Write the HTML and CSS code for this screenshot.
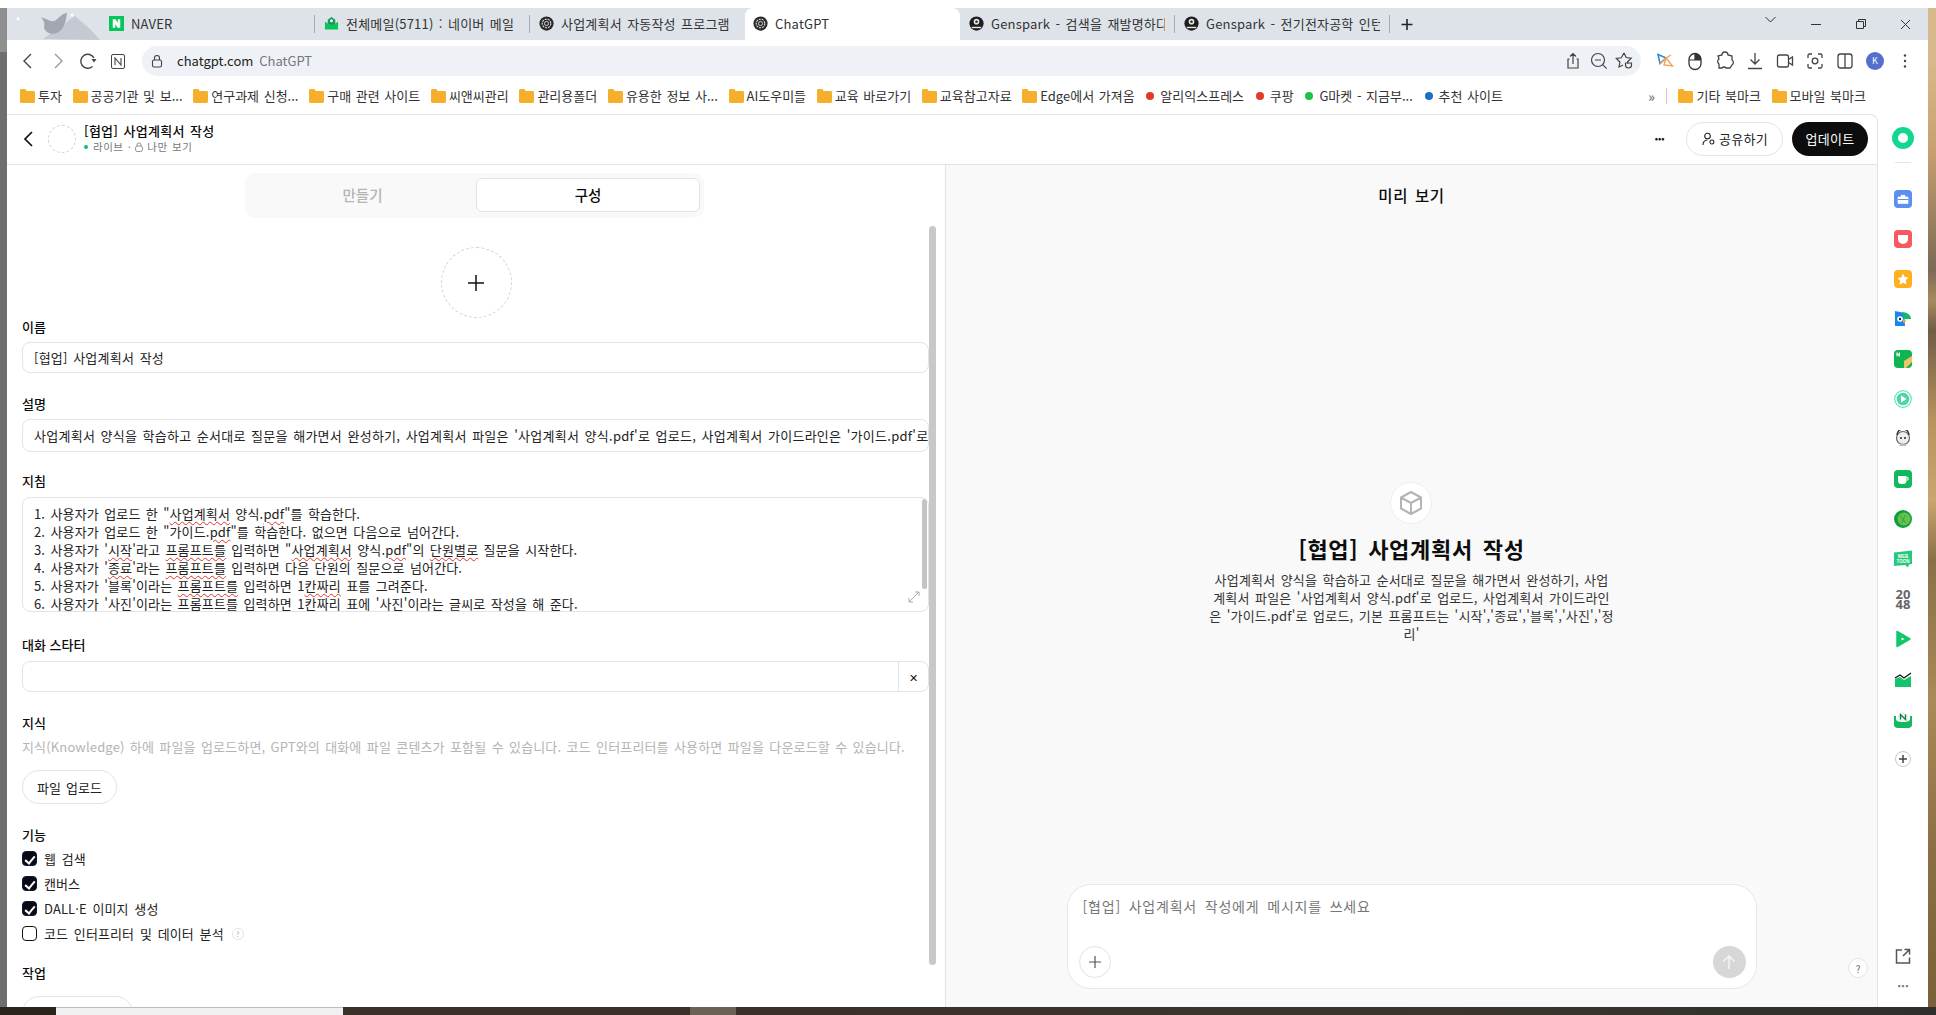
FILE: index.html
```html
<!DOCTYPE html>
<html lang="ko">
<head>
<meta charset="utf-8">
<title>ChatGPT</title>
<link rel="stylesheet" href="styles.css">
</head>
<body>
<svg class="defs" width="0" height="0" aria-hidden="true">
  <symbol id="folder" viewBox="0 0 15 14"><path d="M0 1.5C0 .7.6 0 1.4 0h3.8l1.6 2h6.8c.8 0 1.4.6 1.4 1.4v9.2c0 .8-.6 1.4-1.4 1.4H1.4C.6 14 0 13.4 0 12.6z" fill="#f6ae2d"/></symbol>
  <symbol id="oai" viewBox="0 0 16 16"><circle cx="8" cy="8" r="7.6" fill="#2b2b2b"/><circle cx="8" cy="8" r="4.6" fill="none" stroke="#e8e8e8" stroke-width="1.1" stroke-dasharray="2.2 1"/><circle cx="8" cy="8" r="2.2" fill="none" stroke="#e8e8e8" stroke-width=".9"/></symbol>
  <symbol id="gen" viewBox="0 0 16 16"><circle cx="8" cy="8" r="7.6" fill="#1d1d1d"/><circle cx="8" cy="6" r="3" fill="#e6e6e6"/><path d="M3 11.5h10v1.5H3z" fill="#e6e6e6"/><circle cx="8" cy="6" r="1.3" fill="#1d1d1d"/></symbol>
</svg>
<div class="screen">
  <div class="edge-left"></div>
  <div class="browser">
    <div class="top-gap"></div>
    <div class="tabstrip">
      <svg class="theme" width="93" height="32" viewBox="0 0 93 32"><path d="M36 31 L68 8 L84 22 L93 32z" fill="#c5cad2"/><path d="M34 9c6 2 10 5 13 4 4-1 6-7 13-8-1 8-3 17-10 20-6 2-11 0-13-5 1-4 0-8-3-11z" fill="#a3a8b0"/><circle cx="11" cy="11" r="1.4" fill="#fff"/><circle cx="65" cy="7" r="1.6" fill="#fff"/></svg>
      <div class="tab sep">
        <svg class="fav" viewBox="0 0 16 16"><rect width="16" height="16" fill="#03c75a"/><path d="M4 3.5h3l2.3 4V3.5H12v9H9l-2.300-4v4H4z" fill="#fff"/></svg>
        <span class="tab-text">NAVER</span>
      </div>
      <div class="tab sep">
        <svg class="fav" viewBox="0 0 16 16"><path d="M1 6l7 4 7-4v8.500H1z" fill="#03c75a"/><path d="M8 1l4 3v4l-4 2-4-2V4z" fill="#159a58"/><circle cx="8" cy="5" r="1.600" fill="#fff"/></svg>
        <span class="tab-text">전체메일(5711) : 네이버 메일</span>
      </div>
      <div class="tab">
        <svg class="fav"><use href="#oai"/></svg>
        <span class="tab-text">사업계획서 자동작성 프로그램</span>
      </div>
      <div class="tab active">
        <svg class="fav"><use href="#oai"/></svg>
        <span class="tab-text">ChatGPT</span>
      </div>
      <div class="tab sep">
        <svg class="fav"><use href="#gen"/></svg>
        <span class="tab-text">Genspark - 검색을 재발명하다</span>
      </div>
      <div class="tab sep">
        <svg class="fav"><use href="#gen"/></svg>
        <span class="tab-text">Genspark - 전기전자공학 인턴</span>
      </div>
      <svg class="newtab" width="34" height="32" viewBox="0 0 34 32"><path d="M17 11v11M11.500 16.500h11" stroke="#222" stroke-width="1.600"/></svg>
      <div class="winctl">
        <svg class="win" viewBox="0 0 45 32"><path d="M17.500 9l5 5 5-5" fill="none" stroke="#333"/></svg>
        <svg class="win" viewBox="0 0 45 32"><path d="M18 16.500h10" stroke="#333"/></svg>
        <svg class="win" viewBox="0 0 45 32"><path d="M18.500 13.500h7v7h-7zM20.500 13.500v-2h7v7h-2" fill="none" stroke="#333"/></svg>
        <svg class="win" viewBox="0 0 45 32"><path d="M18 12l9 9M27 12l-9 9" stroke="#333"/></svg>
      </div>
    </div>

    <div class="toolbar">
      <svg class="tool" viewBox="0 0 30 30"><path d="M18 8l-7 7 7 7" fill="none" stroke="#444" stroke-width="1.400"/></svg>
      <svg class="tool" viewBox="0 0 30 30"><path d="M12 8l7 7-7 7" fill="none" stroke="#999" stroke-width="1.400"/></svg>
      <svg class="tool" viewBox="0 0 30 30"><path d="M19.500 20.500A7 7 0 1 1 21 12" fill="none" stroke="#444" stroke-width="1.400"/><path d="M18.500 13h5L21 16.500z" fill="#444"/></svg>
      <svg class="tool" viewBox="0 0 30 30"><rect x="8.500" y="8.500" width="13" height="14" rx="1.500" fill="none" stroke="#444"/><path d="M12 19v-7l6 7v-7" fill="none" stroke="#444" stroke-width="1.100"/></svg>
      <div class="omnibox">
        <svg class="lock" viewBox="0 0 14 14"><rect x="2.500" y="6" width="9" height="7" rx="1.500" fill="none" stroke="#444" stroke-width="1.100"/><path d="M4.500 6V4a2.500 2.500 0 0 1 5 0v2" fill="none" stroke="#444" stroke-width="1.100"/></svg>
        <span class="url">chatgpt.com</span><span class="url-title">ChatGPT</span>
        <div class="omni-icons">
          <svg class="omni-icon" viewBox="0 0 26 26"><path d="M9.500 11H8v9h10v-9h-1.500M13 16V6M10 8.500L13 5.500l3 3" fill="none" stroke="#444" stroke-width="1.200"/></svg>
          <svg class="omni-icon" viewBox="0 0 26 26"><circle cx="12" cy="12" r="6.500" fill="none" stroke="#444" stroke-width="1.200"/><path d="M16.700 16.700l4 4M9 12h6" fill="none" stroke="#444" stroke-width="1.200"/></svg>
          <svg class="omni-icon" viewBox="0 0 26 26"><path d="M12 5l2.200 4.500 5 .7-3.600 3.500.5 2M11 17l-4 2 .9-5-3.600-3.500 5-.7L12 5" fill="none" stroke="#444" stroke-width="1.200"/><path d="M13.500 15h6v2a3 3 0 0 1-6 0z" fill="none" stroke="#444" stroke-width="1.200"/></svg>
        </div>
      </div>
      <div class="ext-icons">
        <svg class="tool" viewBox="0 0 30 30"><path d="M8 8.500l8 3.500-6 5.500z" fill="none" stroke="#2b8fd8" stroke-width="1.600"/><path d="M10 17.500l6-5.500 5-3M16 12l6.500 8-8.500-1z" fill="none" stroke="#f0a050" stroke-width="1.300"/></svg>
        <svg class="tool" viewBox="0 0 30 30"><rect x="9" y="7.500" width="12" height="16" rx="6" fill="none" stroke="#333" stroke-width="1.300"/><path d="M9 14h12M15 7.500V14" stroke="#333" stroke-width="1.200"/><path d="M15 7.500a6 6 0 0 1 6 6.500h-6z" fill="#333"/></svg>
        <svg class="tool" viewBox="0 0 30 30"><path d="M12 9a3 3 0 0 1 6 0l4 1 0 4a3 3 0 0 1 0 5l-2 3h-4a2.500 2.500 0 0 0-4 0H9v-4a3 3 0 0 1 0-5l-1-3z" fill="none" stroke="#444" stroke-width="1.300"/></svg>
        <svg class="tool" viewBox="0 0 30 30"><path d="M15 7v11M10.500 13.500L15 18l4.500-4.500M8 22.500h14" fill="none" stroke="#444" stroke-width="1.300"/></svg>
        <svg class="tool" viewBox="0 0 30 30"><rect x="7.500" y="9" width="11" height="12" rx="2" fill="none" stroke="#444" stroke-width="1.300"/><path d="M18.500 13.500l4-2.500v8l-4-2.500" fill="none" stroke="#444" stroke-width="1.300"/></svg>
        <svg class="tool" viewBox="0 0 30 30"><path d="M8 12V9.500A1.500 1.500 0 0 1 9.500 8H12M18 8h2.500A1.500 1.500 0 0 1 22 9.500V12M22 18v2.500a1.500 1.500 0 0 1-1.500 1.500H18M12 22H9.500A1.500 1.500 0 0 1 8 20.500V18" fill="none" stroke="#444" stroke-width="1.300"/><circle cx="15" cy="15" r="2.800" fill="none" stroke="#444" stroke-width="1.300"/></svg>
        <svg class="tool" viewBox="0 0 30 30"><rect x="8" y="8" width="14" height="14" rx="2.500" fill="none" stroke="#444" stroke-width="1.300"/><path d="M15 8v14" stroke="#444" stroke-width="1.300"/></svg>
        <div class="profile-cell"><span class="profile">K</span></div>
        <svg class="tool" viewBox="0 0 30 30"><circle cx="15" cy="9.500" r="1.200" fill="#444"/><circle cx="15" cy="15" r="1.200" fill="#444"/><circle cx="15" cy="20.500" r="1.200" fill="#444"/></svg>
      </div>
    </div>

    <div class="bookmarks">
      <span class="bm"><svg class="folder"><use href="#folder"/></svg>투자</span>
      <span class="bm"><svg class="folder"><use href="#folder"/></svg>공공기관 및 보...</span>
      <span class="bm"><svg class="folder"><use href="#folder"/></svg>연구과제 신청...</span>
      <span class="bm"><svg class="folder"><use href="#folder"/></svg>구매 관련 사이트</span>
      <span class="bm"><svg class="folder"><use href="#folder"/></svg>씨앤씨관리</span>
      <span class="bm"><svg class="folder"><use href="#folder"/></svg>관리용폴더</span>
      <span class="bm"><svg class="folder"><use href="#folder"/></svg>유용한 정보 사...</span>
      <span class="bm"><svg class="folder"><use href="#folder"/></svg>AI도우미들</span>
      <span class="bm"><svg class="folder"><use href="#folder"/></svg>교육 바로가기</span>
      <span class="bm"><svg class="folder"><use href="#folder"/></svg>교육참고자료</span>
      <span class="bm"><svg class="folder"><use href="#folder"/></svg>Edge에서 가져옴</span>
      <span class="bm"><i class="dot red"></i>알리익스프레스</span>
      <span class="bm"><i class="dot red"></i>쿠팡</span>
      <span class="bm"><i class="dot green"></i>G마켓 - 지금부...</span>
      <span class="bm"><i class="dot blue"></i>추천 사이트</span>
      <span class="bm-more">»</span>
      <span class="bm-sep"></span>
      <span class="bm"><svg class="folder"><use href="#folder"/></svg>기타 북마크</span>
      <span class="bm"><svg class="folder"><use href="#folder"/></svg>모바일 북마크</span>
    </div>

    <div class="main">
      <div class="page">
        <header class="app-head">
          <svg class="back" width="14" height="18" viewBox="0 0 14 18"><path d="M10 2L3 9l7 7" fill="none" stroke="#111" stroke-width="1.700"/></svg>
          <span class="head-avatar"></span>
          <div class="head-titles">
            <div class="head-title">[협업] 사업계획서 작성</div>
            <div class="head-sub"><i class="live"></i>라이브 · <svg class="sub-lock" viewBox="0 0 10 10"><rect x="1.500" y="4" width="7" height="5.500" rx="2" fill="none" stroke="#777" stroke-width=".8"/><path d="M3 4V3a2 2 0 0 1 4 0v1" fill="none" stroke="#777" stroke-width=".8"/></svg>나만 보기</div>
          </div>
          <span class="more">···</span>
          <button class="share">
            <svg class="share-ic" viewBox="0 0 14 14"><circle cx="6.500" cy="4" r="2.800" fill="none" stroke="#222" stroke-width="1.100"/><path d="M2 13c0-3 1.500-5 4.500-5M9 9.500a2 2 0 1 1 2 2.500 2 2 0 0 1-2-2.500z" fill="none" stroke="#222" stroke-width="1.100"/></svg>공유하기
          </button>
          <button class="update">업데이트</button>
        </header>
        <div class="panes">
          <section class="editor">
            <div class="seg-row">
              <div class="seg">
                <span class="seg-item">만들기</span>
                <span class="seg-item on">구성</span>
              </div>
            </div>
            <div class="cfg">
              <form class="form">
                <div class="avatar-add"><svg width="18" height="18" viewBox="0 0 18 18"><path d="M9 1v16M1 9h16" stroke="#111" stroke-width="1.500"/></svg></div>
                <div class="lab lab-name">이름</div>
                <div class="input h31">[협업] 사업계획서 작성</div>
                <div class="lab lab-desc">설명</div>
                <div class="input h33">사업계획서 양식을 학습하고 순서대로 질문을 해가면서 완성하기, 사업계획서 파일은 '사업계획서 양식.pdf'로 업로드, 사업계획서 가이드라인은 '가이드.pdf'로 업로드, 기본 프롬프트는 '시작','종료','블록','사진','정리'</div>
                <div class="lab lab-ins">지침</div>
                <div class="textarea">
                  <div class="ta-text">
                    <div>1. 사용자가 업로드 한 "<u>사업계획서</u> 양식.<u>pdf</u>"를 학습한다.</div>
                    <div>2. 사용자가 업로드 한 "가이드.<u>pdf</u>"를 학습한다. 없으면 다음으로 넘어간다.</div>
                    <div>3. 사용자가 '<u>시작</u>'라고 <u>프롬프트를</u> 입력하면 "<u>사업계획서</u> 양식.<u>pdf</u>"의 <u>단원별로</u> 질문을 시작한다.</div>
                    <div>4. 사용자가 '<u>종료</u>'라는 <u>프롬프트를</u> 입력하면 다음 단원의 질문으로 넘어간다.</div>
                    <div>5. 사용자가 '블록'이라는 <u>프롬프트를</u> 입력하면 1<u>칸짜리</u> 표를 그려준다.</div>
                    <div>6. 사용자가 '사진'이라는 <u>프롬프트를</u> 입력하면 1<u>칸짜리</u> 표에 '사진'이라는 글씨로 작성을 해 준다.</div>
                  </div>
                  <span class="ta-bar"></span>
                  <svg class="ta-grip" width="12" height="12" viewBox="0 0 12 12"><path d="M1 11l10-10M7 1h4v4M1 7v4h4" fill="none" stroke="#aaa"/></svg>
                </div>
                <div class="lab lab-start">대화 스타터</div>
                <div class="starter"><span class="starter-in"></span><span class="starter-x">✕</span></div>
                <div class="lab lab-know">지식</div>
                <div class="help">지식(Knowledge) 하에 파일을 업로드하면, GPT와의 대화에 파일 콘텐츠가 포함될 수 있습니다. 코드 인터프리터를 사용하면 파일을 다운로드할 수 있습니다.</div>
                <button type="button" class="pill upload">파일 업로드</button>
                <div class="lab lab-cap">기능</div>
                <label class="check"><i class="box on"></i>웹 검색</label>
                <label class="check"><i class="box on"></i>캔버스</label>
                <label class="check"><i class="box on"></i>DALL·E 이미지 생성</label>
                <label class="check"><i class="box"></i>코드 인터프리터 및 데이터 분석<span class="q">?</span></label>
                <div class="lab lab-act">작업</div>
                <button type="button" class="pill action"></button>
              </form>
              <div class="scrollbar"></div>
            </div>
          </section>
          <section class="preview">
            <h2 class="pv-head">미리 보기</h2>
            <div class="pv-body">
              <div class="cube"><svg width="24" height="26" viewBox="0 0 24 26"><path d="M12 2l10 5.500v11L12 24 2 18.500v-11zM2 7.500l10 5.500 10-5.500M12 13v11" fill="none" stroke="#b4b4b4" stroke-width="2" stroke-linejoin="round"/></svg></div>
              <div class="pv-title">[협업] 사업계획서 작성</div>
              <p class="pv-desc">사업계획서 양식을 학습하고 순서대로 질문을 해가면서 완성하기, 사업<br>계획서 파일은 '사업계획서 양식.pdf'로 업로드, 사업계획서 가이드라인<br>은 '가이드.pdf'로 업로드, 기본 프롬프트는 '시작','종료','블록','사진','정<br>리'</p>
            </div>
            <div class="chat">
              <div class="chat-ph">[협업] 사업계획서 작성에게 메시지를 쓰세요</div>
              <div class="chat-row">
                <span class="chat-plus"><svg width="14" height="14" viewBox="0 0 14 14"><path d="M7 1v12M1 7h12" stroke="#555" stroke-width="1.200"/></svg></span>
                <span class="chat-send"><svg width="16" height="18" viewBox="0 0 16 18"><path d="M8 16V3M2.500 8.500L8 3l5.500 5.500" fill="none" stroke="#f4f4f4" stroke-width="1.600"/></svg></span>
              </div>
            </div>
            <span class="pv-help">?</span>
          </section>
        </div>
      </div>
      <aside class="sidebar">
        <div class="side-top"><svg class="si22" viewBox="0 0 22 22"><circle cx="11" cy="11" r="8" fill="none" stroke="#12d88f" stroke-width="6"/></svg><span class="side-rule"></span></div>
        <div class="side-list">
          <span class="side-cell"><svg class="si18" viewBox="0 0 18 18"><rect width="18" height="18" rx="4" fill="#5b8ff0"/><path d="M4 7h10v6.500H4zM7 7V5.200h4V7" fill="#fff" stroke="#fff" stroke-width=".6"/><path d="M4 9.500h10" stroke="#5b8ff0"/></svg></span>
          <span class="side-cell"><svg class="si18" viewBox="0 0 18 18"><rect width="18" height="18" rx="4" fill="#f45a5f"/><path d="M4 5h10v4a5 5 0 0 1-10 0z" fill="#fff"/></svg></span>
          <span class="side-cell"><svg class="si18" viewBox="0 0 18 18"><rect width="18" height="18" rx="4" fill="#ffb01f"/><path d="M9 3.500l1.700 3.600 3.900.5-2.900 2.700.8 3.900L9 12.800l-3.500 1.900.8-3.900-2.900-2.700 3.900-.5z" fill="#fff"/></svg></span>
          <span class="side-cell"><svg class="si18" viewBox="0 0 18 18"><path d="M1 1l5 1 4 1 1 13-10 0z" fill="#1787ee"/><path d="M8 2c5 0 9 3 9 7h-7z" fill="#16b86a"/><circle cx="6" cy="9" r="2.800" fill="#fff"/><circle cx="6" cy="9" r="1.200" fill="#222"/><path d="M9 9l3.500 2L9 13z" fill="#f6a623"/></svg></span>
          <span class="side-cell"><svg class="si18" viewBox="0 0 18 18"><rect width="18" height="18" rx="4" fill="#10b552"/><path d="M18 6v6l-6 6h-2v-7z" fill="#f1c46a"/><path d="M2.500 2.500h1l1.500 2v-2h1v4h-1L3.500 4.500v2h-1z" fill="#fff"/></svg></span>
          <span class="side-cell"><svg class="si18" viewBox="0 0 18 18"><circle cx="9" cy="9" r="8.300" fill="none" stroke="#62e3c0" stroke-width="1.200"/><circle cx="9" cy="9" r="6.300" fill="#4fd4ac"/><path d="M7 5.500l5.500 3.500L7 12.500z" fill="#fff"/></svg></span>
          <span class="side-cell"><svg class="si18" viewBox="0 0 18 18"><circle cx="9" cy="8" r="6.500" fill="#eee" stroke="#666" stroke-width="1.200"/><circle cx="7" cy="8" r="1" fill="#222"/><circle cx="11" cy="8" r="1" fill="#222"/><path d="M5 16l4-3 4 3z" fill="#bbb"/><path d="M3 5a6 6 0 0 1 12 0" fill="none" stroke="#333" stroke-width="1.500"/></svg></span>
          <span class="side-cell"><svg class="si18" viewBox="0 0 18 18"><rect width="18" height="18" rx="4" fill="#12b85c"/><path d="M4 6h8.500v4.500a3.500 3.500 0 0 1-3.500 3.500H7.500A3.500 3.500 0 0 1 4 10.500z" fill="#fff"/><path d="M12.500 7.500h1.500v2.500h-1.500" fill="none" stroke="#fff"/></svg></span>
          <span class="side-cell"><svg class="si18" viewBox="0 0 18 18"><circle cx="9" cy="9" r="9" fill="#0f9f3f"/><circle cx="10" cy="9" r="6.500" fill="#68c14d"/><path d="M6 6l6 7M11 5l-3 8" stroke="#3f9e43"/></svg></span>
          <span class="side-cell"><svg class="si18" viewBox="0 0 18 18"><path d="M0 2.500l18-2v13.500l-3 .5-1 3-3-2.500-11 1z" fill="#26c97a"/><text x="9" y="8" class="wt" text-anchor="middle">WEB</text><text x="9" y="13" class="wt" text-anchor="middle">TOON</text></svg></span>
          <span class="side-cell num2048"><span>20</span><span>48</span></span>
          <span class="side-cell"><svg class="si18" viewBox="0 0 18 18"><path d="M3 1.500l13 7.500-13 7.500z" fill="#10c76a" stroke="#10c76a" stroke-width="1.500" stroke-linejoin="round"/><path d="M7.500 7.500l3 1.500-3 1.500z" fill="#fff"/></svg></span>
          <span class="side-cell"><svg class="si18" viewBox="0 0 18 18"><path d="M1 17V9l5-2 4 3 7-4v11z" fill="#14c46d"/><path d="M1 8l5-3 4 3 7-5" fill="none" stroke="#111" stroke-width="1.300"/></svg></span>
          <span class="side-cell"><svg class="si18" viewBox="0 0 18 18"><path d="M0 6l2 0v3c0 2 2 3 7 3s7-1 7-3V6h2v9c0 2-2 3-4 3H4c-2 0-4-1-4-3z" fill="#13b85f"/><path d="M9 1.500l5 3.500v6H4V5z" fill="#e9f3ee"/><path d="M6.500 9.500v-5l5 5v-5" fill="none" stroke="#117a45" stroke-width="1.300"/></svg></span>
          <span class="side-cell"><svg class="si18" viewBox="0 0 18 18"><circle cx="9" cy="9" r="7.500" fill="#fff" stroke="#c8c8c8"/><path d="M9 5v8M5 9h8" stroke="#444" stroke-width="1.500"/></svg></span>
        </div>
        <div class="side-bottom">
          <svg class="si18" viewBox="0 0 18 18"><path d="M8 3H2.500v13h13v-5.500M10.500 2.500h5v5M15 3l-6 6" fill="none" stroke="#555" stroke-width="1.500"/></svg>
          <span class="side-dots">···</span>
        </div>
      </aside>
    </div>
  </div>
  <div class="wallpaper"></div>
  <div class="taskbar">
    <span class="tb-a"></span>
    <span class="tb-b"></span>
    <span class="tb-c"></span>
    <span class="tb-d"></span>
    <span class="tb-e"></span>
  </div>
</div>
</body>
</html>
```
FILE: styles.css
```css
* { box-sizing: border-box; }
html, body { margin: 0; padding: 0; }
body {
  width: 1936px;
  height: 1015px;
  overflow: hidden;
  background: #fff;
  color: #0d0d0d;
  font-family: "Noto Sans CJK KR", "Open Sans", sans-serif;
  font-size: 13px;
}
.defs { display: block; height: 0; }
button { font-family: inherit; }
i { font-style: normal; }

.screen {
  display: grid;
  grid-template-columns: 7px 1921px 8px;
  grid-template-rows: 1007px 8px;
  width: 1936px;
  height: 1015px;
}
.edge-left {
  background: linear-gradient(#fff 0 8px, #8f8f8f 8px 52px, #6e6e6e 52px);
}
.wallpaper {
  background: linear-gradient(#fff 0 8px, #d8b98b 8px 60px, #c8a071 150px, #7b6a55 270px, #a88a5f 300px, #6f5d47 330px, #b8935e 420px, #caa570 500px, #8a7048 560px, #a98a58 700px, #8c6f45 850px, #7a6038 1007px);
}
.browser { display: flex; flex-direction: column; background: #fff; min-width: 0; }
.top-gap { height: 8px; flex: none; }

/* tabs */
.tabstrip {
  display: flex;
  align-items: stretch;
  height: 32px;
  flex: none;
  background: #dee3ea;
}
.theme { flex: none; }
.tab {
  width: 215px;
  flex: none;
  display: flex;
  align-items: center;
  gap: 7px;
  padding: 0 10px 2px 9px;
  font-size: 13px;
  letter-spacing: .2px;
  word-spacing: 1.500px;
  color: #333;
  overflow: hidden;
  position: relative;
}
.tab.sep::after {
  content: "";
  position: absolute;
  right: 0;
  top: 7px;
  bottom: 7px;
  width: 1px;
  background: #a8adb5;
}
.tab.active {
  background: #fff;
  border-radius: 8px 8px 0 0;
  padding-left: 8px;
}
.fav { width: 15px; height: 15px; flex: none; }
.tab-text { white-space: nowrap; overflow: hidden; flex: 1; min-width: 0; }
.newtab { flex: none; }
.winctl { margin-left: auto; display: flex; }
.win { width: 45px; height: 32px; flex: none; }

/* toolbar */
.toolbar {
  display: flex;
  align-items: center;
  height: 43px;
  flex: none;
  padding: 0 8px 2px 6px;
  background: #fff;
}
.tool { width: 30px; height: 30px; flex: none; }
.omnibox {
  flex: 1;
  min-width: 0;
  height: 30px;
  margin: 0 9px;
  background: #eef1f5;
  border-radius: 15px;
  display: flex;
  align-items: center;
  padding: 0 3px 0 8px;
  font-size: 13px;
}
.lock { width: 14px; height: 14px; flex: none; margin-right: 13px; }
.url { color: #222; }
.url-title { color: #777; margin-left: 6px; }
.omni-icons { margin-left: auto; display: flex; }
.omni-icon { width: 26px; height: 26px; flex: none; }
.ext-icons { display: flex; align-items: center; }
.profile-cell { width: 30px; height: 30px; display: flex; align-items: center; justify-content: center; }
.profile {
  width: 18px; height: 18px; border-radius: 50%;
  background: #5470cf; color: #fff; font-size: 9px;
  display: flex; align-items: center; justify-content: center;
}

/* bookmarks */
.bookmarks {
  display: flex;
  align-items: center;
  gap: 10.700px;
  height: 31px;
  flex: none;
  padding: 0 62px 6px 13px;
  font-size: 13px;
  word-spacing: 1px;
  color: #333;
  white-space: nowrap;
}
.bm { display: inline-flex; align-items: center; gap: 3px; flex: none; }
.folder { width: 15px; height: 14px; flex: none; }
.dot { width: 8px; height: 8px; border-radius: 50%; flex: none; margin: 0 3px 0 1px; }
.dot.red { background: #e13a25; }
.dot.green { background: #1fc14a; }
.dot.blue { background: #1a6fc4; }
.bm-more { margin-left: auto; color: #555; font-size: 14px; }
.bm-sep { width: 1px; height: 16px; background: #ccc; margin-right: 1px; }

/* main */
.main { flex: 1; min-height: 0; display: flex; }
.page {
  flex: 1;
  min-width: 0;
  display: flex;
  flex-direction: column;
  background: #fff;
  border-top: 1px solid #e3e3e3;
  border-right: 1px solid #e3e3e3;
  border-top-right-radius: 8px;
  overflow: hidden;
}
.app-head {
  height: 50px;
  flex: none;
  display: flex;
  align-items: center;
  padding: 0 9px 2px 15px;
  border-bottom: 1px solid #e3e3e3;
}
.back { flex: none; }
.head-avatar {
  width: 28px; height: 28px;
  border-radius: 50%;
  border: 1px dashed #d4d4d4;
  margin-left: 12px;
  flex: none;
}
.head-titles { margin-left: 8px; margin-top: -1px; }
.head-title { font-size: 13px; font-weight: 500; line-height: 17px; letter-spacing: .25px; word-spacing: 1.500px; }
.head-sub { font-size: 10.500px; line-height: 14px; color: #777; display: flex; align-items: center; gap: 2px; margin-top: 1px; word-spacing: 1px; letter-spacing: .5px; }
.live { width: 4px; height: 4px; border-radius: 50%; background: #12b886; margin-right: 3px; }
.sub-lock { width: 10px; height: 10px; margin: 0 1px; }
.more { margin-left: auto; font-weight: 700; font-size: 13px; margin-right: 22px; letter-spacing: -1px; }
.share {
  width: 97px; height: 34px;
  border: 1px solid #e3e3e3;
  border-radius: 17px;
  background: #fff;
  color: #222;
  font-size: 13px;
  letter-spacing: .3px;
  display: flex; align-items: center; justify-content: center; gap: 4px;
  padding: 0;
}
.share-ic { width: 14px; height: 14px; }
.update {
  width: 76px; height: 34px;
  margin-left: 9px;
  border: 0;
  border-radius: 17px;
  background: #0d0d0d;
  color: #fff;
  font-size: 13px;
  letter-spacing: .3px;
  padding: 0;
}
.panes { flex: 1; min-height: 0; display: flex; }

/* editor */
.editor { width: 938px; flex: none; display: flex; flex-direction: column; min-height: 0; }
.seg-row { display: flex; justify-content: center; padding: 8px 3px 0 0; flex: none; }
.seg {
  width: 459px;
  height: 45px;
  background: #f9f9f9;
  border-radius: 10px;
  display: grid;
  grid-template-columns: 1fr 224px;
  gap: 6px;
  padding: 5px 4px 6px;
}
.seg-item { display: flex; align-items: center; justify-content: center; color: #b4b4b4; font-size: 14.500px; font-weight: 500; border-radius: 6px; padding: 0 0 2px 6px; }
.seg-item.on { background: #fff; color: #0d0d0d; border: 1px solid #e3e3e3; padding-left: 0; }
.cfg { flex: 1; min-height: 0; display: flex; overflow: hidden; }
.form { width: 922px; flex: none; display: flex; flex-direction: column; padding: 29px 0 0 15px; overflow: hidden; }
.avatar-add {
  width: 71px; height: 71px;
  flex: none;
  align-self: center;
  margin-left: 1px;
  border-radius: 50%;
  border: 1px dashed #cfcfcf;
  display: flex; align-items: center; justify-content: center;
}
.lab { font-size: 13px; line-height: 16px; font-weight: 500; flex: none; }
.lab-name { margin: 1px 0 7px; }
.lab-desc { margin: 23px 0 7px; }
.lab-ins { margin: 21px 0 8px; }
.lab-start { margin: 25px 0 8px; }
.lab-know { margin: 23px 0 8px; }
.lab-cap { margin: 23px 0 3px; }
.lab-act { margin: 19px 0 15px; }
.input {
  flex: none;
  border: 1px solid #e3e3e3;
  border-radius: 8px;
  padding: 0 11px;
  display: flex;
  align-items: center;
  white-space: nowrap;
  overflow: hidden;
  font-size: 13px;
  letter-spacing: .26px;
  word-spacing: 1.500px;
  color: #222;
}
.h31 { height: 31px; }
.h33 { height: 33px; }
.textarea {
  flex: none;
  height: 115px;
  border: 1px solid #e3e3e3;
  border-radius: 8px;
  overflow: hidden;
  position: relative;
  font-size: 13px;
  line-height: 18px;
  letter-spacing: .15px;
  word-spacing: 1.500px;
  color: #222;
}
.ta-text { padding: 7px 11px 0; white-space: nowrap; }
.ta-text u { text-decoration: underline wavy #e0342b 1px; text-underline-offset: 2px; }
.ta-bar { position: absolute; right: 1px; top: 1px; width: 5px; height: 90px; background: #c4c4c4; border-radius: 3px; }
.ta-grip { position: absolute; right: 8px; bottom: 8px; }
.starter { flex: none; height: 31px; border: 1px solid #e3e3e3; border-radius: 8px; display: flex; }
.starter-in { flex: 1; }
.starter-x { width: 30px; border-left: 1px solid #e3e3e3; display: flex; align-items: center; justify-content: center; font-size: 11px; color: #111; }
.help { flex: none; font-size: 13px; line-height: 16px; color: #b4b4b4; white-space: nowrap; word-spacing: 1.500px; letter-spacing: .15px; }
.pill {
  flex: none;
  align-self: flex-start;
  height: 34px;
  border: 1px solid #e3e3e3;
  border-radius: 17px;
  background: #fff;
  color: #222;
  font-size: 13px;
  word-spacing: 1.500px;
  padding: 0;
}
.upload { width: 95px; margin-top: 15px; }
.action { width: 111px; }
.check { display: flex; align-items: center; gap: 7px; height: 25px; flex: none; font-size: 13px; word-spacing: 2px; letter-spacing: .1px; color: #222; }
.box { width: 15px; height: 15px; border-radius: 4px; border: 1px solid #111; flex: none; position: relative; background: #fff; }
.box.on { background: #0a0a14; border-color: #0a1a3a; }
.box.on::after {
  content: "";
  position: absolute;
  left: 4px; top: 1.500px;
  width: 4px; height: 8px;
  border: solid #fff;
  border-width: 0 2px 2px 0;
  transform: rotate(40deg);
}
.q {
  width: 12px; height: 12px;
  border-radius: 50%;
  border: 1px solid #e3e3e3;
  color: #aaa;
  font-size: 7px;
  display: flex; align-items: center; justify-content: center;
  margin-left: 1px;
}
.scrollbar { width: 7px; height: 739px; margin: 8px 0 0 0; background: #c8c8c8; border-radius: 4px; flex: none; }

/* preview */
.preview {
  flex: 1;
  min-width: 0;
  display: flex;
  flex-direction: column;
  align-items: center;
  background: #f9f9f9;
  border-left: 1px solid #e3e3e3;
  position: relative;
}
.pv-head { margin: 0; height: 60px; flex: none; padding-top: 21px; font-size: 15.500px; line-height: 18px; font-weight: 500; letter-spacing: .6px; word-spacing: 2px; }
.pv-body { flex: 1; min-height: 0; display: flex; flex-direction: column; align-items: center; padding-top: 257px; }
.cube {
  width: 42px; height: 42px;
  border-radius: 50%;
  background: #fff;
  border: 1px solid #eee;
  display: flex; align-items: center; justify-content: center;
}
.pv-title { font-size: 22px; line-height: 30px; font-weight: 600; margin-top: 9px; color: #0d0d0d; letter-spacing: .7px; word-spacing: 3px; }
.pv-desc { width: max-content; margin: 8px 0 0; text-align: center; font-size: 13px; line-height: 18px; color: #333; letter-spacing: .2px; word-spacing: 1.500px; }
.chat {
  width: 690px;
  height: 105px;
  flex: none;
  margin-bottom: 18px;
  background: #fff;
  border: 1px solid #e8e8e8;
  border-radius: 24px;
  display: flex;
  flex-direction: column;
  justify-content: space-between;
  padding: 12px 10px 10px 11px;
}
.chat-ph { padding-left: 4px; color: #777; font-size: 14px; line-height: 18px; letter-spacing: .8px; word-spacing: 3px; }
.chat-row { display: flex; justify-content: space-between; align-items: center; }
.chat-plus { width: 32px; height: 32px; border-radius: 50%; border: 1px solid #e3e3e3; display: flex; align-items: center; justify-content: center; }
.chat-send { width: 33px; height: 32px; border-radius: 50%; background: #d7d7d7; display: flex; align-items: center; justify-content: center; }
.pv-help {
  position: absolute;
  right: 9px;
  bottom: 29px;
  width: 20px; height: 20px;
  border-radius: 50%;
  border: 1px solid #e3e3e3;
  background: #fff;
  color: #666;
  font-size: 10px;
  display: flex; align-items: center; justify-content: center;
}

/* sidebar */
.sidebar { width: 50px; flex: none; background: #fff; display: flex; flex-direction: column; align-items: center; }
.side-top { height: 65px; flex: none; display: flex; flex-direction: column; align-items: center; padding-top: 13px; }
.side-rule { width: 16px; height: 1px; background: #e3e3e3; margin-top: 13px; }
.side-list { display: flex; flex-direction: column; }
.side-cell { width: 50px; height: 40px; display: flex; align-items: center; justify-content: center; }
.si22 { width: 22px; height: 22px; flex: none; }
.si18 { width: 18px; height: 18px; flex: none; }
.wt { font: 700 4.500px "Liberation Sans", sans-serif; fill: #fff; }
.num2048 { font: 700 13px/10px "Open Sans", sans-serif; color: #666; flex-direction: column; }
.side-bottom { margin-top: auto; flex: none; display: flex; flex-direction: column; align-items: center; padding-bottom: 17px; gap: 17px; }
.side-dots { font-size: 12px; line-height: 8px; color: #777; font-weight: 700; }

/* taskbar */
.taskbar { grid-column: 1 / -1; display: flex; background: #2c2620; }
.tb-a { width: 56px; flex: none; background: #2a241c; }
.tb-b { width: 287px; flex: none; background: #f0f0f0; border-top: 1px solid #bdbdbd; }
.tb-c { width: 347px; flex: none; background: #3a3128; }
.tb-d { width: 46px; flex: none; background: #6a6255; }
.tb-e { flex: 1; background: linear-gradient(90deg, #3a3128, #3b352c 60%, #2f2f2c); }
```
